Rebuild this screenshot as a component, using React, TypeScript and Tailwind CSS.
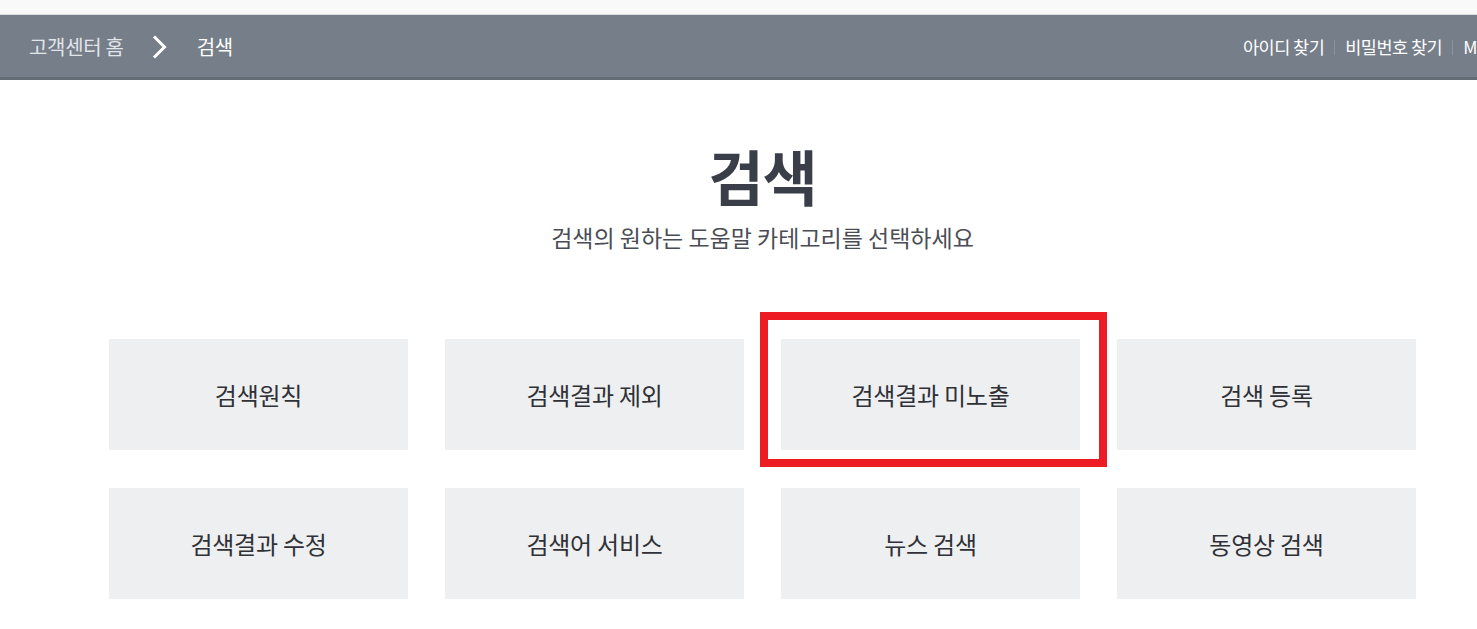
const categories = [
  "검색원칙",
  "검색결과 제외",
  "검색결과 미노출",
  "검색 등록",
  "검색결과 수정",
  "검색어 서비스",
  "뉴스 검색",
  "동영상 검색",
];

const font = "font-['Noto_Sans_CJK_KR','Noto_Sans',sans-serif]";

function Chevron() {
  return (
    <svg width="16" height="24" viewBox="0 0 16 24" fill="none" aria-hidden="true">
      <path d="M2 1.5 L12.5 12 L2 22.5" stroke="#ffffff" strokeWidth="3" />
    </svg>
  );
}

export default function App() {
  return (
    <div className={`w-full overflow-hidden bg-white ${font}`}>
      <div className="w-[1525px]">
        <div className="h-[15px] bg-[#f9f9f9] border-b border-[#dcdcdc]" />

        {/* breadcrumb bar */}
        <div className="h-[65px] bg-[#757e89] border-b-[3px] border-[#646c76] flex items-center pl-[29px] pt-[2px]">
          <div className="w-[1214px] flex items-center">
            <span className="text-[20px] text-[#e2e5ea] tracking-[-0.015em]">고객센터 홈</span>
            <span className="ml-[28px] mr-[29px] flex items-center">
              <Chevron />
            </span>
            <span className="text-[20px] text-white tracking-[-0.015em]">검색</span>
          </div>

          <nav className="flex items-center whitespace-nowrap text-[17.5px] text-white tracking-[-0.03em]">
            <a>아이디 찾기</a>
            <span className="mx-[10px] h-[15px] w-px bg-[#8a929c]" />
            <a>비밀번호 찾기</a>
            <span className="mx-[10px] h-[15px] w-px bg-[#8a929c]" />
            <a>MY</a>
          </nav>
        </div>

        {/* title */}
        <div className="flex flex-col items-center pt-[55px]">
          <h1 className="text-[60px] leading-[80px] font-bold text-[#3a3e48] tracking-[-0.02em]">검색</h1>
          <p className="mt-[6px] text-[23px] leading-[32px] text-[#4a4d55]">
            검색의 원하는 도움말 카테고리를 선택하세요
          </p>
        </div>

        {/* category grid */}
        <div className="mt-[86px] mx-auto w-[1307px] grid grid-cols-4 gap-x-[37px] gap-y-[38px]">
          {categories.map((c, i) => (
            <div key={c} className="relative">
              <div className="h-[111px] bg-[#eeeff1] flex items-center justify-center text-[24px] text-[#2f3136] tracking-[-0.01em]">
                {c}
              </div>
              {i === 2 && (
                <div className="absolute left-[-21px] right-[-27px] top-[-27px] bottom-[-17px] border-[8px] border-[#ed1c24] pointer-events-none" />
              )}
            </div>
          ))}
        </div>
      </div>
    </div>
  );
}
